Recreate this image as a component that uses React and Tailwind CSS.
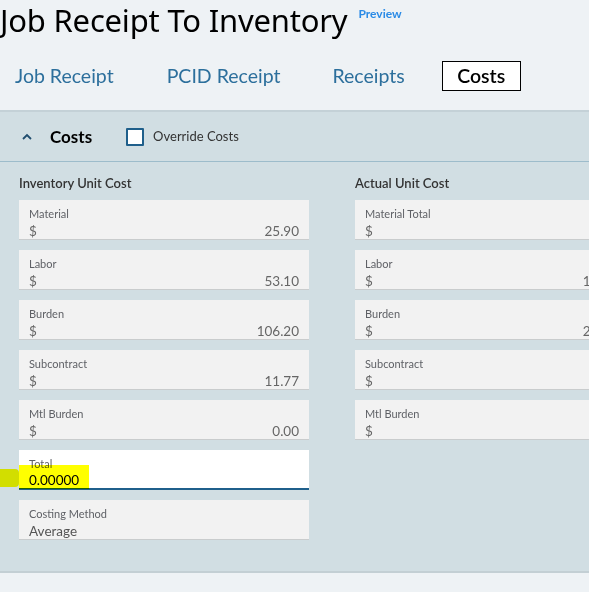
import React from "react";

const left = [
  { label: "Material", value: "25.90" },
  { label: "Labor", value: "53.10" },
  { label: "Burden", value: "106.20" },
  { label: "Subcontract", value: "11.77" },
  { label: "Mtl Burden", value: "0.00" },
];
const right = [
  { label: "Material Total", value: "" },
  { label: "Labor", value: "159.30" },
  { label: "Burden", value: "265.50" },
  { label: "Subcontract", value: "" },
  { label: "Mtl Burden", value: "" },
];

function Field({ label, value, wide }) {
  return (
    <div className={"h-[40px] bg-[#f2f2f2] border-b border-[#c9cccd] pl-[10px] pt-[7px] flex flex-col " + (wide ? "pr-[20px]" : "pr-[10px]")}>
      <div className="text-[11px] leading-[14px] text-[#5f6166]">{label}</div>
      <div className="flex justify-between text-[13.5px] leading-[20px] text-[#666]">
        <span>$</span>
        <span>{value}</span>
      </div>
    </div>
  );
}

export default function App() {
  return (
    <div
      className="w-[589px] h-[592px] overflow-hidden bg-[#eef2f5] relative"
      style={{ fontFamily: "Lato, 'Noto Sans', sans-serif" }}
    >
      <div className="flex items-start h-[48px]">
        <h1 className="leading-[38px] text-black pt-[1px] tracking-[-0.2px]" style={{ fontFamily: "'Noto Sans', sans-serif", fontSize: "31px" }}>
          Job Receipt To Inventory
        </h1>
        <span className="ml-[11px] mt-[5px] text-[12px] font-bold text-[#2b8be6]">Preview</span>
      </div>
      <div className="flex items-center h-[50px] text-[19.5px] text-[#2c6f9c] mt-[3px]">
        <span className="ml-[15px] shrink-0">Job Receipt</span>
        <span className="ml-[53px] shrink-0">PCID Receipt</span>
        <span className="ml-[52px] shrink-0">Receipts</span>
        <span className="ml-[37px] shrink-0 h-[30px] w-[79px] border border-black bg-white text-black flex items-center justify-center font-semibold">
          Costs
        </span>
      </div>
      <div className="mt-[9px] bg-[#d1dee3] border-t-2 border-[#c4d1d7] h-[463px] border-b-2 border-b-[#c3cfd4]">
        <div className="h-[50px] flex items-center border-b border-[#9dbccb]">
          <svg className="ml-[21px]" width="12" height="12" viewBox="0 0 12 12">
            <path d="M2 8 L6 4 L10 8" fill="none" stroke="#1f4d6e" strokeWidth="1.8" />
          </svg>
          <span className="ml-[17px] text-[17px] font-bold text-black">Costs</span>
          <span className="ml-[34px] w-[18px] h-[18px] border-2 border-[#1f5f8b] bg-white rounded-[1px]" />
          <span className="ml-[9px] text-[13px] text-[#333]">Override Costs</span>
        </div>
        <div className="flex pt-[12px]">
          <div className="ml-[19px] w-[290px] shrink-0 flex flex-col">
            <div className="text-[13px] font-semibold text-[#333] h-[26px]">Inventory Unit Cost</div>
            <div className="flex flex-col gap-[10px]">
              {left.map((f) => (
                <Field key={f.label} {...f} />
              ))}
              <div className="h-[40px] bg-white border-b-2 border-[#1f5f8b] pl-[10px] pt-[7px] flex flex-col">
                <div className="text-[11px] leading-[14px] text-[#5f6166]">Total</div>
                <div className="text-[13.5px] leading-[19px] text-black">0.00000</div>
              </div>
              <div className="h-[40px] bg-[#f2f2f2] border-b border-[#c9cccd] pl-[10px] pt-[7px] flex flex-col">
                <div className="text-[11px] leading-[14px] text-[#5f6166]">Costing Method</div>
                <div className="text-[13.5px] leading-[20px] text-[#555]">Average</div>
              </div>
            </div>
          </div>
          <div className="ml-[46px] w-[290px] shrink-0 flex flex-col">
            <div className="text-[13px] font-semibold text-[#333] h-[26px]">Actual Unit Cost</div>
            <div className="flex flex-col gap-[10px]">
              {right.map((f) => (
                <Field key={f.label} {...f} wide />
              ))}
            </div>
          </div>
        </div>
      </div>
      <div className="absolute left-[0px] top-[469px] w-[19px] h-[18px] bg-[#d2de00] rounded-r-sm" />
      <div className="absolute left-[19px] top-[465px] w-[70px] h-[24px] bg-[#ffff00] mix-blend-multiply" />
    </div>
  );
}
